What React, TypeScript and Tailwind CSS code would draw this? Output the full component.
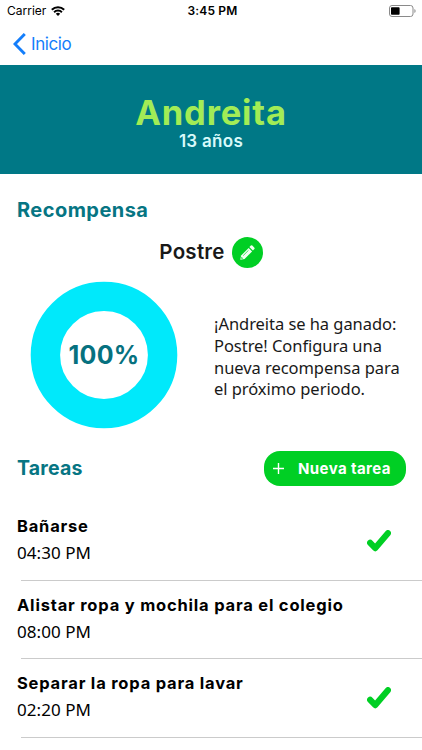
type Task = {
  name: string;
  time: string;
  done: boolean;
};

const tasks: Task[] = [
  { name: "Bañarse", time: "04:30 PM", done: true },
  { name: "Alistar ropa y mochila para el colegio", time: "08:00 PM", done: false },
  { name: "Separar la ropa para lavar", time: "02:20 PM", done: true },
];

function StatusBar() {
  return (
    <div className="grid h-[22px] grid-cols-3 items-center pl-[7px] pr-[6px] text-black">
      <div className="flex items-center gap-[5px]">
        <span className="text-[12px] leading-none">Carrier</span>
        <svg width="14" height="10" viewBox="0 0 14 10" fill="none" stroke="currentColor" strokeWidth="2">
          <path d="M0.8 3.7a8.8 8.8 0 0 1 12.4 0" />
          <path d="M3.1 6.2a5.5 5.5 0 0 1 7.8 0" />
          <path d="M7 10L4.8 7.8a3.1 3.1 0 0 1 4.4 0z" fill="currentColor" stroke="none" />
        </svg>
      </div>
      <span className="pl-[2px] text-center text-[12px] font-semibold leading-none tracking-[0.15px]">3:45 PM</span>
      <div className="flex justify-end">
        <svg width="27" height="12" viewBox="0 0 27 12">
          <rect x="0.5" y="0.5" width="23.5" height="11" rx="2.5" fill="none" stroke="#8a8a8a" />
          <rect x="2" y="2.2" width="8.6" height="7.6" rx="0.8" fill="#000" />
          <path d="M25.3 4v4q1.4-.6 1.4-2t-1.4-2" fill="#9a9a9a" />
        </svg>
      </div>
    </div>
  );
}

function ProgressRing() {
  return (
    <div className="relative h-[148px] w-[148px]">
      <svg width="148" height="148" viewBox="0 0 148 148">
        <circle cx="74" cy="74" r="58.6" fill="none" stroke="#00e9fb" strokeWidth="29.4" />
      </svg>
      <span className="absolute inset-0 flex items-center justify-center text-[25px] font-bold leading-none tracking-[0.3px] text-[#06717f]">
        100%
      </span>
    </div>
  );
}

function CheckMark() {
  return (
    <svg
      width="24"
      height="22"
      viewBox="0 0 24 22"
      fill="none"
      stroke="#00cf24"
      strokeWidth="6.2"
      strokeLinecap="round"
      strokeLinejoin="round"
    >
      <path d="M3.2 12.8L8.3 18.1L20.9 3.2" />
    </svg>
  );
}

function TaskRow({ task }: { task: Task }) {
  return (
    <li className="h-[78.5px]">
      <div className="flex h-[77.5px] items-center justify-between pl-[17px] pr-[31px]">
        <div className="flex flex-col pb-[2px] text-black">
          <span className="whitespace-nowrap text-[16.5px] font-bold leading-[27px] tracking-[0.8px]">{task.name}</span>
          <span className="font-['Noto_Sans',sans-serif] text-[17px] leading-[26px] tracking-[0.05px]">{task.time}</span>
        </div>
        {task.done && <CheckMark />}
      </div>
      <div className="ml-[20.5px] h-px bg-[#cbcbcb]" />
    </li>
  );
}

export default function App() {
  return (
    <div className="h-[750px] w-[422px] overflow-hidden bg-white font-['Inter',sans-serif]">
      <StatusBar />

      <nav className="flex h-[43px] items-center gap-[5px] pl-[13px] text-[#147efb]">
        <svg width="13" height="22" viewBox="0 0 13 22" fill="none" stroke="currentColor" strokeWidth="2.9">
          <path d="M11.8 1L2 11l9.8 10" />
        </svg>
        <span className="pt-[1px] text-[17px] leading-none tracking-[-0.4px]">Inicio</span>
      </nav>

      <header className="flex h-[109px] flex-col items-center bg-[#007886] pt-[30px]">
        <h1 className="text-[34.5px] font-bold leading-[36px] tracking-[0.85px] text-[#a2ec56]">Andreita</h1>
        <p className="mt-[2px] text-[17px] font-semibold leading-[16px] tracking-[0.3px] text-[#d8fafa]">13 años</p>
      </header>

      <h2 className="pl-[17px] pt-[24px] text-[20px] font-bold leading-[24px] tracking-[0.45px] text-[#067583]">
        Recompensa
      </h2>

      <div className="mt-[16px] flex h-[29px] items-center justify-center gap-[7px]">
        <span className="text-[20.5px] font-semibold leading-none tracking-[0.25px] text-[#191919]">Postre</span>
        <button className="flex h-[31px] w-[31px] items-center justify-center rounded-full bg-[#00cf24]">
          <svg width="15" height="15" viewBox="0 0 15 15" fill="#f1fff2">
            <path d="M0.3 14.7L1.1 10.4L8.6 2.9L12.1 6.4L4.6 13.9Z" />
            <path d="M9.4 2.1L10.9 0.6Q11.6 0 12.3 0.6L14.4 2.7Q15 3.4 14.4 4.1L12.9 5.6Z" />
            <path d="M3.2 10.6L8.5 5.3" stroke="#00cf24" strokeWidth="0.7" />
            <path d="M1.5 11.8L3.2 13.5L1.2 13.8Z" fill="#00cf24" />
          </svg>
        </button>
      </div>

      <div className="mt-[14px] flex items-start pl-[30px]">
        <ProgressRing />
        <p className="ml-[36px] mt-[32px] w-[200px] whitespace-nowrap font-['Noto_Sans',sans-serif] text-[16.5px] leading-[21.8px] tracking-[-0.05px] text-[#191919]">
          ¡Andreita se ha ganado:
          <br />
          Postre! Configura una
          <br />
          nueva recompensa para
          <br />
          el próximo periodo.
        </p>
      </div>

      <div className="mt-[22px] flex h-[35px] items-center justify-between pl-[17px] pr-[16.5px]">
        <h2 className="text-[19.5px] font-bold leading-none tracking-[0.2px] text-[#067583]">Tareas</h2>
        <button className="flex h-[35px] w-[141.5px] items-center rounded-[16px] bg-[#00cf24] pl-[9px] text-white">
          <svg width="11" height="11" viewBox="0 0 11 11" stroke="currentColor" strokeWidth="1.4">
            <path d="M5.5 0v11M0 5.5h11" />
          </svg>
          <span className="ml-[14px] text-[15px] font-bold leading-none tracking-[0.4px]">Nueva tarea</span>
        </button>
      </div>

      <ul className="mt-[16px]">
        {tasks.map((task) => (
          <TaskRow key={task.name} task={task} />
        ))}
      </ul>
    </div>
  );
}
